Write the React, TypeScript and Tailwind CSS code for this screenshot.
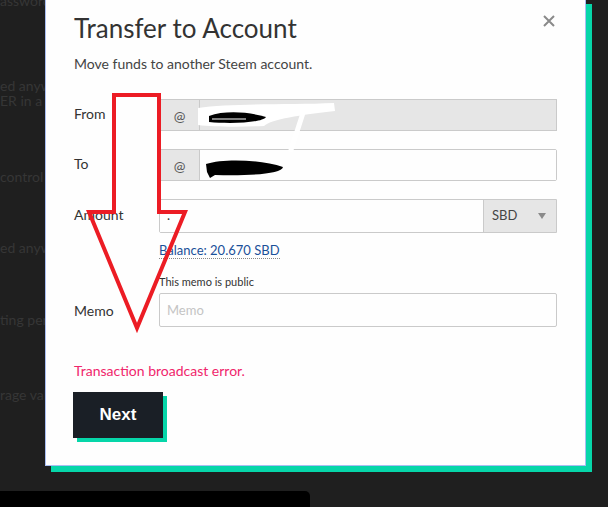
import React from 'react'

const BG_LINES = [
  { text: 'assword is changed.', mt: 'mt-[-8px]' },
  { text: 'ed anywhere else.', mt: 'mt-[67px]' },
  { text: 'ER in a password manager.', mt: 'mt-[-3px]' },
  { text: 'control over your account.', mt: 'mt-[58px]' },
  { text: 'ed anywhere else.', mt: 'mt-[53px]' },
  { text: 'ting period.', mt: 'mt-[54px]' },
  { text: 'rage value.', mt: 'mt-[57px]' },
]

function Field({ label, children }: { label: string; children: React.ReactNode }) {
  return (
    <div className="flex items-center">
      <div className="w-[85px] shrink-0 pb-[4px] text-[14px] text-[#333]">{label}</div>
      <div className="flex-1">{children}</div>
    </div>
  )
}

function Annotations() {
  return (
    <svg className="absolute inset-0 pointer-events-none" width="608" height="507" viewBox="0 0 608 507">
      {/* white scribble over From */}
      <path d="M198 108 C 230 103, 290 105, 334 103 L 335 111 C 300 115, 272 119, 264 126 C 240 127, 215 127, 198 125 Z" fill="#fff" />
      <path d="M303 113 L 291 150" stroke="#fff" strokeWidth="5" strokeLinecap="round" />
      <path d="M209 116 C 225 110, 250 112, 266 117 C 262 123, 230 124, 209 122 Z" fill="#000" />
      <path d="M212 119 L 246 119" stroke="#fff" strokeWidth="1" />
      {/* black scribble over To */}
      <path d="M206 164 C 225 158, 262 160, 283 167 C 282 174, 250 176, 215 175 L 210 178 L 207 172 Z" fill="#000" />
      {/* arrow */}
      <polygon
        points="114,95 159,95 159,212 185,212 137,328 89,212 114,212"
        fill="none"
        stroke="#ec1c24"
        strokeWidth="4"
        strokeLinejoin="miter"
      />
    </svg>
  )
}

export default function App() {
  return (
    <div className="relative w-[608px] h-[507px] overflow-hidden bg-[#1f1f1f] font-['Lato',sans-serif]">
      {/* page behind the dialog */}
      <div className="w-[45px] overflow-hidden flex flex-col text-[14px] leading-[18px] text-[#363636] whitespace-nowrap">
        {BG_LINES.map((l, i) => (
          <div key={i} className={l.mt}>{l.text}</div>
        ))}
      </div>
      <div className="absolute left-0 bottom-0 w-[310px] h-[16px] bg-black rounded-tr-[5px]" />

      {/* dialog */}
      <div className="absolute left-[45px] top-[-2px] w-[541px] h-[468px] bg-[#fefefe] border border-[#a8bdf2] shadow-[6px_6px_0_#06d6a9] px-[28px] flex flex-col">
        <div className="mt-[13px] flex items-start justify-between">
          <h2 className="text-[26px] leading-[32px] text-[#333]">Transfer to Account</h2>
          <button className="mt-[1px] w-[16px] h-[16px] flex items-center justify-center text-[#8a8a8a]">
            <svg width="12" height="12" viewBox="0 0 12 12">
              <path d="M1 1 L11 11 M11 1 L1 11" stroke="currentColor" strokeWidth="2" />
            </svg>
          </button>
        </div>
        <p className="mt-[10px] text-[14px] leading-[20px] text-[#444]">Move funds to another Steem account.</p>

        <div className="mt-[25px]">
          <Field label="From">
            <div className="flex h-[32px] border border-[#cacaca] bg-[#e6e6e6]">
              <span className="w-[40px] flex items-center justify-center border-r border-[#cacaca] text-[14px] text-[#555]">@</span>
              <input disabled className="flex-1 bg-transparent outline-none" />
            </div>
          </Field>
        </div>

        <div className="mt-[18px]">
          <Field label="To">
            <div className="flex h-[32px] border border-[#cacaca] rounded-r-[2px]">
              <span className="w-[40px] flex items-center justify-center border-r border-[#cacaca] bg-[#e6e6e6] text-[14px] text-[#555]">@</span>
              <input className="flex-1 bg-[#fefefe] outline-none" />
            </div>
          </Field>
        </div>

        <div className="mt-[18px]">
          <Field label="Amount">
            <div className="flex h-[34px] border border-[#cacaca] rounded-l-[2px]">
              <input defaultValue="." className="flex-1 min-w-0 px-[7px] bg-[#fefefe] outline-none text-[13px] text-[#333]" />
              <div className="w-[73px] flex items-center justify-between pl-[8px] pr-[10px] border-l border-[#cacaca] bg-[#e6e6e6] text-[13px] text-[#444]">
                <span>SBD</span>
                <svg width="8" height="6" viewBox="0 0 8 6"><path d="M0 0 H8 L4 6 Z" fill="#8a8a8a" /></svg>
              </div>
            </div>
          </Field>
        </div>

        <div className="mt-[7px] pl-[85px] h-[18px] leading-[18px]">
          <span className="text-[13px] text-[#1a5099] border-b border-dotted border-[#888]">Balance: 20.670 SBD</span>
        </div>

        <div className="mt-[17px] flex">
          <div className="w-[85px] shrink-0 flex items-end">
            <div className="h-[34px] flex items-center text-[14px] text-[#333]">Memo</div>
          </div>
          <div className="flex-1 flex flex-col">
            <span className="h-[14px] leading-[14px] text-[11px] text-[#333]">This memo is public</span>
            <input
              placeholder="Memo"
              className="mt-[4px] h-[34px] px-[7px] border border-[#cacaca] rounded-[2px] bg-[#fefefe] outline-none text-[13px] placeholder:text-[#c4c4c4]"
            />
          </div>
        </div>

        <p className="mt-[34px] h-[20px] leading-[20px] text-[14px] text-[#f0266c]">Transaction broadcast error.</p>

        <div className="mt-[11px]">
          <button className="w-[90px] h-[46px] ml-[-1px] bg-[#1a1f26] shadow-[4px_4px_0_#06d6a9] text-white text-[17px] font-bold font-['Liberation_Sans',sans-serif]">
            Next
          </button>
        </div>
      </div>

      <Annotations />
    </div>
  )
}
